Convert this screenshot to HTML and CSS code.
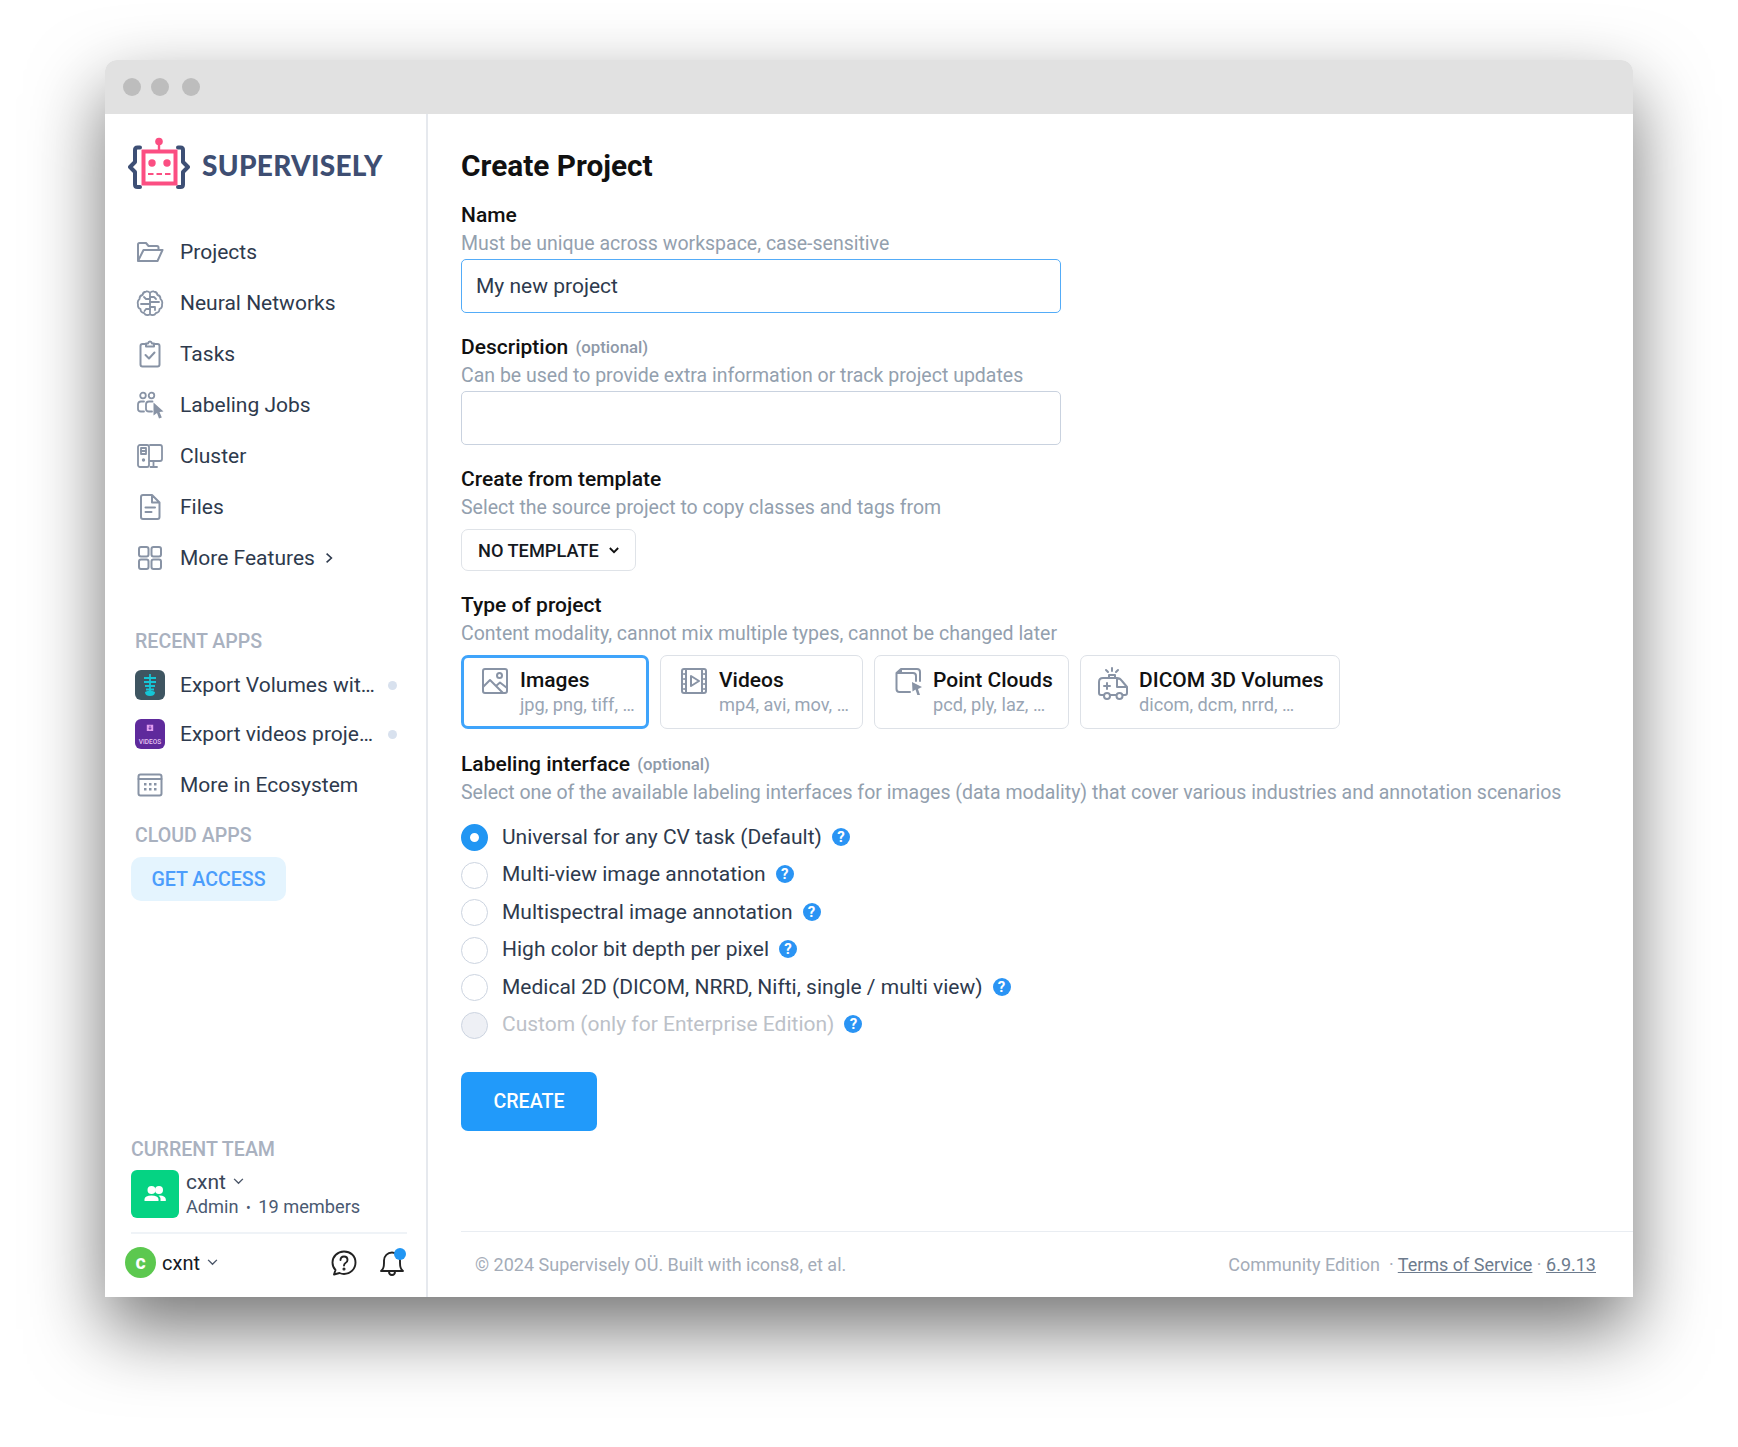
FILE: index.html
```html
<!DOCTYPE html>
<html lang="en">
<head>
<meta charset="utf-8">
<title>Create Project - Supervisely</title>
<link rel="stylesheet" href="styles.css">
</head>
<body>
<div class="window">
  <div class="titlebar"><span class="dot"></span><span class="dot"></span><span class="dot dot-last"></span></div>
  <div class="app">
    <aside class="sidebar">
      <div class="logo">
        <svg class="logo-mark" viewBox="0 0 62 52" width="62" height="52">
          <g fill="none" stroke="#3d4f75" stroke-width="4" stroke-linecap="round" stroke-linejoin="round">
            <path d="M12 10.5H9.5Q7 10.5 7 13V25L2 30L7 35V47.5Q7 50 9.5 50H12"/>
            <path d="M50 10.5H52.5Q55 10.5 55 13V25L60 30L55 35V47.5Q55 50 52.5 50H50"/>
          </g>
          <rect x="15.5" y="14.5" width="32" height="32" fill="#fff" stroke="#fb4e82" stroke-width="4"/>
          <path d="M31 5V14" stroke="#fb4e82" stroke-width="2.4"/>
          <circle cx="31" cy="4.5" r="3.8" fill="#fb4e82"/>
          <circle cx="24" cy="26" r="3.7" fill="#fb4e82"/>
          <circle cx="39" cy="26" r="3.7" fill="#fb4e82"/>
          <path d="M20 37H43" stroke="#fb4e82" stroke-width="2.2" stroke-dasharray="5.5 3"/>
        </svg>
        <span class="logo-text">SUPERVISELY</span>
      </div>
      <nav class="nav">
        <a class="nav-row"><span class="nav-icon"><svg viewBox="0 0 28 24" width="28" height="24" class="ico"><path d="M2 21V4.5Q2 3 3.5 3H10L12.5 6H21Q22.5 6 22.5 7.5V10M2 21H21.5L26.5 10H7.5L2 21Z"/></svg></span>Projects</a>
        <a class="nav-row"><span class="nav-icon"><svg viewBox="0 0 28 28" width="28" height="28" class="ico ico-thin"><path d="M14 4Q12.500 2 10 2.500Q7 3 6.500 6Q3.500 6.500 3.500 10Q1 12 2 15.500Q1.500 19 4.500 20Q4.500 23.500 8 24Q9.500 26.500 12 26Q13.500 26 14 25Q14.500 26 16 26Q18.500 26.500 20 24Q23.500 23.500 23.500 20Q26.500 19 26 15.500Q27 12 24.500 10Q24.500 6.500 21.500 6Q21 3 18 2.500Q15.500 2 14 4V25"/><path d="M14 10H10L8 8M14 15H5M14 20H10L8.500 22M14 8H18L20 10M14 13H23M14 18H19V21"/></svg></span>Neural Networks</a>
        <a class="nav-row"><span class="nav-icon"><svg viewBox="0 0 28 28" width="28" height="28" class="ico"><path d="M10 4H6.500Q4.500 4 4.500 6V24.500Q4.500 26.500 6.500 26.500H21.500Q23.500 26.500 23.500 24.500V6Q23.500 4 21.500 4H18M10 6.500V3.500H12Q12.500 1.500 14 1.500T16 3.500H18V6.500ZM9.500 15L13 18.500L18.500 12.500"/></svg></span>Tasks</a>
        <a class="nav-row"><span class="nav-icon"><svg viewBox="0 0 28 28" width="28" height="28" class="ico ico-thin"><circle cx="7" cy="4.500" r="2.800"/><circle cx="15.500" cy="4.500" r="2.800"/><path d="M8 10.500H5Q2 10.500 2 13.500V18Q2 20.500 5 20.500H8M16.500 10.500H13Q10 10.500 10 13.500V18Q10 20.500 13 20.500H16"/><path class="ico-fill" d="M17.500 11.500L27.500 20.500L23.500 21L25.800 26.500L23 27.500L21 22L17.500 24.500Z"/></svg></span>Labeling Jobs</a>
        <a class="nav-row"><span class="nav-icon"><svg viewBox="0 0 28 28" width="28" height="28" class="ico ico-thin"><rect x="2" y="3" width="11" height="22" rx="2"/><rect x="5" y="6" width="5" height="6"/><path d="M5 9H10"/><circle cx="7.500" cy="18" r=".8"/><path d="M14 3H24Q26 3 26 5V17Q26 19 24 19H14M17.500 19V25M14.500 25H21"/></svg></span>Cluster</a>
        <a class="nav-row"><span class="nav-icon"><svg viewBox="0 0 28 28" width="28" height="28" class="ico"><path d="M16 2H7Q5 2 5 4V24Q5 26 7 26H21.500Q23.500 26 23.500 24V9.500ZM16 2V9.500H23.500M9.500 14.500H19M9.500 19H15.500"/></svg></span>Files</a>
        <a class="nav-row"><span class="nav-icon"><svg viewBox="0 0 28 28" width="28" height="28" class="ico"><rect x="3" y="3" width="9.500" height="9.500" rx="2"/><rect x="15.500" y="3" width="9.500" height="9.500" rx="2"/><rect x="3" y="15.500" width="9.500" height="9.500" rx="2"/><rect x="15.500" y="15.500" width="9.500" height="9.500" rx="2"/></svg></span>More Features<svg class="chev-right" viewBox="0 0 10 14" width="8" height="12"><path d="M2 1.500L8 7L2 12.500"/></svg></a>
      </nav>
      <h3 class="side-title side-title-recent">RECENT APPS</h3>
      <div class="app-row">
        <span class="app-icon app-icon-teal"><svg viewBox="0 0 30 30" width="30" height="30"><path d="M15 4V22M9 8H21M9 12H21M10 16H20M11 19.500H19" stroke="#15c6d6" stroke-width="1.800" fill="none"/><path d="M10 22Q15 19 20 22Q20 26 15 26Q10 26 10 22Z" fill="#15c6d6"/></svg></span>
        <span class="app-name">Export Volumes wit…</span><span class="status-dot"></span>
      </div>
      <div class="app-row app-row-next">
        <span class="app-icon app-icon-purple"><svg viewBox="0 0 30 30" width="30" height="16"><path d="M9 3H21V15H9Z" fill="#e29df0" transform="translate(0 2)"/><path d="M15 7V13M12.500 11L15 14L17.500 11" stroke="#5f2a9c" stroke-width="1.800" fill="none"/></svg><span class="app-icon-label">VIDEOS</span></span>
        <span class="app-name">Export videos proje…</span><span class="status-dot"></span>
      </div>
      <a class="nav-row nav-row-eco"><span class="nav-icon nav-icon-eco"><svg viewBox="0 0 28 28" width="28" height="28" class="ico"><rect x="2.500" y="3.500" width="23" height="21" rx="2"/><path d="M2.500 8H25.500"/><g class="ico-fill"><rect x="8" y="12" width="2.500" height="2.500"/><rect x="13" y="12" width="2.500" height="2.500"/><rect x="18" y="12" width="2.500" height="2.500"/><rect x="8" y="17" width="2.500" height="2.500"/><rect x="13" y="17" width="2.500" height="2.500"/><rect x="18" y="17" width="2.500" height="2.500"/></g></svg></span>More in Ecosystem</a>
      <h3 class="side-title side-title-cloud">CLOUD APPS</h3>
      <button class="get-access">GET ACCESS</button>

      <div class="team-block">
        <h3 class="team-title">CURRENT TEAM</h3>
        <div class="team">
          <span class="team-icon"><svg viewBox="0 0 24 24" width="24" height="24" fill="#fff"><circle cx="8.500" cy="8" r="4"/><circle cx="16" cy="8" r="4"/><path d="M1.500 19V17Q2 13.500 8.500 13.500T15.500 17V19ZM17 13.500Q22 13.800 22.800 17V19H17.500V16.500Q17.500 15 15.500 13.800Z"/></svg></span>
          <div class="team-info">
            <div class="team-name">cxnt<svg class="chev-down" viewBox="0 0 12 8" width="11" height="7"><path d="M1 1L6 6L11 1"/></svg></div>
            <div class="team-meta">Admin<span class="team-sep">•</span>19 members</div>
          </div>
        </div>
        <div class="user-row">
          <span class="avatar">c</span>
          <span class="user-name">cxnt</span>
          <svg class="chev-down" viewBox="0 0 12 8" width="11" height="7"><path d="M1 1L6 6L11 1"/></svg>
          <span class="user-actions">
            <svg viewBox="0 0 28 28" width="28" height="28" class="ico-dark"><path d="M14 2.500C7.500 2.500 2.500 7.500 2.500 13.500C2.500 16.500 3.500 19 5.500 21L4 25.500L9.500 24C11 24.700 12.500 25 14 25C20.500 25 25.500 20 25.500 13.500S20.500 2.500 14 2.500Z"/><path d="M10.500 11Q10.500 7.500 14 7.500T17.500 11Q17.500 13 15.500 14Q14 15 14 16.500"/><circle cx="14" cy="20" r=".6"/></svg>
            <span class="bell"><svg viewBox="0 0 26 28" width="26" height="28" class="ico-dark"><path d="M2 22Q5 20 5 14V11.500C5 7 8.500 3.500 13 3.500S21 7 21 11.500V14Q21 20 24 22ZM10 22.500Q10 26 13 26T16 22.500"/></svg><span class="bell-dot"></span></span>
          </span>
        </div>
      </div>
    </aside>
    <main class="main">
      <div class="content">
        <h1 class="page-title">Create Project</h1>
        <section class="field">
          <div class="label">Name</div>
          <div class="hint">Must be unique across workspace, case-sensitive</div>
          <div class="input input-focus">My new project</div>
        </section>
        <section class="field">
          <div class="label">Description <span class="optional">(optional)</span></div>
          <div class="hint">Can be used to provide extra information or track project updates</div>
          <div class="input"></div>
        </section>
        <section class="field field-template">
          <div class="label">Create from template</div>
          <div class="hint">Select the source project to copy classes and tags from</div>
          <button class="template-btn">NO TEMPLATE<svg class="chev-down chev-bold" viewBox="0 0 12 8" width="10" height="7"><path d="M1 1L6 6L11 1"/></svg></button>
        </section>
        <section class="field">
          <div class="label">Type of project</div>
          <div class="hint">Content modality, cannot mix multiple types, cannot be changed later</div>
          <div class="cards">
            <div class="card card-active card-images">
              <svg viewBox="0 0 28 28" width="28" height="28" class="card-ico"><rect x="2" y="2" width="24" height="24" rx="2"/><circle cx="18.500" cy="8.500" r="2.500"/><path d="M2 20L9 13L22 26M15 19L19 15.500L26 21"/></svg>
              <div><div class="card-title">Images</div><div class="card-sub">jpg, png, tiff, …</div></div>
            </div>
            <div class="card card-videos">
              <svg viewBox="0 0 28 28" width="28" height="28" class="card-ico"><rect x="2" y="2" width="24" height="24" rx="2"/><path d="M6 2V26M22 2V26"/><path d="M4 7H4.100M4 12H4.100M4 17H4.100M4 22H4.100M24 7H24.100M24 12H24.100M24 17H24.100M24 22H24.100"/><path d="M11 9L19 14L11 19Z"/></svg>
              <div><div class="card-title">Videos</div><div class="card-sub">mp4, avi, mov, …</div></div>
            </div>
            <div class="card card-clouds">
              <svg viewBox="0 0 28 28" width="28" height="28" class="card-ico"><path d="M7 2H23Q26 2 26 5V14M7 2L2.500 6V22Q2.500 25 5.500 25H16M2.500 6H19Q22 6 22 9V14M7 2V6"/><path class="ico-fill" d="M18 15L28 20L24 22L26 28L23.500 28.500L21.500 22.500L18.500 24.500Z"/></svg>
              <div><div class="card-title">Point Clouds</div><div class="card-sub">pcd, ply, laz, …</div></div>
            </div>
            <div class="card card-dicom">
              <svg viewBox="0 0 32 34" width="32" height="34" class="card-ico"><path d="M7 28H4Q2 28 2 26V15Q2 11 6 11H20Q23 11 25 14L30 20V26Q30 28 28 28H26M13 28H19M20 12V20H30M7 19H13M10 16V22"/><circle cx="10" cy="29" r="3"/><circle cx="22.500" cy="29" r="3"/><path d="M12 11V8H18V11M15 1V4M9 3L11 5M21 3L19 5"/></svg>
              <div><div class="card-title">DICOM 3D Volumes</div><div class="card-sub">dicom, dcm, nrrd, …</div></div>
            </div>
          </div>
        </section>
        <section class="field field-radio">
          <div class="label">Labeling interface <span class="optional">(optional)</span></div>
          <div class="hint">Select one of the available labeling interfaces for images (data modality) that cover various industries and annotation scenarios</div>
          <div class="radios">
            <div class="radio-row"><span class="radio radio-on"></span><span class="radio-text">Universal for any CV task (Default)</span><span class="help">?</span></div>
            <div class="radio-row"><span class="radio"></span><span class="radio-text">Multi-view image annotation</span><span class="help">?</span></div>
            <div class="radio-row"><span class="radio"></span><span class="radio-text">Multispectral image annotation</span><span class="help">?</span></div>
            <div class="radio-row"><span class="radio"></span><span class="radio-text">High color bit depth per pixel</span><span class="help">?</span></div>
            <div class="radio-row"><span class="radio"></span><span class="radio-text">Medical 2D (DICOM, NRRD, Nifti, single / multi view)</span><span class="help">?</span></div>
            <div class="radio-row radio-row-off"><span class="radio radio-off"></span><span class="radio-text">Custom (only for Enterprise Edition)</span><span class="help">?</span></div>
          </div>
        </section>
        <button class="create-btn">CREATE</button>
      </div>
      <footer class="footer">
        <span>© 2024 Supervisely OÜ. Built with icons8, et al.</span>
        <span class="footer-right">Community Edition &nbsp;· <a class="footer-link">Terms of Service</a> · <a class="footer-link">6.9.13</a></span>
      </footer>
    </main>
  </div>
</div>
</body>
</html>
```
FILE: styles.css
```css
* { box-sizing: border-box; }
html, body { margin: 0; padding: 0; background: #fff; }
body { height: 1447px; overflow: hidden; padding: 60px 105px 0; font-family: Roboto, "Liberation Sans", sans-serif; color: #2e3a4d; }

.window { width: 1528px; height: 1237px; background: #fff; border-radius: 12px 12px 0 0; box-shadow: 0 32px 75px rgba(0,0,0,.55); display: flex; flex-direction: column; }
.titlebar { height: 54px; flex: none; background: #e1e1e1; border-radius: 12px 12px 0 0; display: flex; align-items: center; padding: 0 0 0 18px; gap: 10px; }
.dot { width: 18px; height: 18px; border-radius: 50%; background: #bdbdbd; }
.dot-last { margin-left: 3px; }
.app { flex: 1; display: flex; min-height: 0; }

.sidebar { width: 323px; flex: none; border-right: 2px solid #e6e9ee; display: flex; flex-direction: column; padding-top: 23px; }
.logo { display: flex; align-items: flex-start; padding-left: 23px; height: 52px; gap: 12px; }
.logo-mark { flex: none; }
.logo-text { font-family: Lato, "Open Sans", sans-serif; font-weight: 900; font-size: 28px; line-height: 30px; color: #3e4e72; margin-top: 13px; letter-spacing: .3px; }
.nav { margin-top: 37px; display: flex; flex-direction: column; }
.nav-row { height: 51px; display: flex; align-items: center; padding-left: 31px; font-size: 21px; color: #2e3a4d; }
.nav-icon { width: 28px; height: 28px; margin-right: 16px; display: flex; align-items: center; justify-content: center; flex: none; }
.ico, .card-ico { fill: none; stroke: #8893a5; stroke-width: 2; stroke-linejoin: round; stroke-linecap: round; flex: none; }
.ico-thin { stroke-width: 1.800; }
.ico-fill { fill: #8893a5; stroke: none; }
.chev-right { margin-left: 10px; fill: none; stroke: #2e3a4d; stroke-width: 2; }
.chev-down { fill: none; stroke: #4a5568; stroke-width: 1.600; margin-left: 7px; }
.chev-bold { stroke: #111; stroke-width: 2.200; margin-left: 10px; }

.side-title { margin: 0; font-size: 19.600px; line-height: 26px; font-weight: 500; color: #a9b1bf; padding-left: 30px; }
.side-title-recent { margin-top: 46px; }
.side-title-cloud { margin-top: 13px; }
.app-row { display: flex; align-items: center; height: 30px; padding-left: 30px; margin-top: 15px; font-size: 21px; }
.app-row-next { margin-top: 19px; }
.app-icon { width: 30px; height: 30px; border-radius: 6px; flex: none; margin-right: 15px; display: flex; flex-direction: column; align-items: center; overflow: hidden; }
.app-icon-teal { background: #3e5561; }
.app-icon-purple { background: #5f2a9c; padding-top: 3px; }
.app-icon-label { font-size: 6.500px; line-height: 8px; color: #e6c3f2; font-weight: 500; }
.app-name { width: 208px; white-space: nowrap; color: #2e3a4d; }
.status-dot { width: 9px; height: 9px; border-radius: 50%; background: #d8e1ee; }
.nav-row-eco { margin-top: 11px; height: 50px; }
.get-access { align-self: flex-start; margin: 8px 0 0 26px; width: 155px; height: 44px; border: 0; border-radius: 10px; background: #e4f4fe; color: #4b9dfc; font: 500 19.600px Roboto, sans-serif; }

.team-block { margin-top: auto; padding: 0 19px 0 26px; }
.team-title { margin: 0; font-size: 19.600px; line-height: 26px; font-weight: 500; color: #a9b1bf; }
.team { display: flex; align-items: center; gap: 7px; margin-top: 7px; height: 48px; }
.team-icon { width: 48px; height: 48px; border-radius: 6px; background: #05d383; display: flex; align-items: center; justify-content: center; flex: none; }
.team-info { display: flex; flex-direction: column; }
.team-name { font-size: 21px; line-height: 26px; color: #3a4658; display: flex; align-items: center; }
.team-meta { font-size: 18.200px; line-height: 24px; color: #4a5a72; }
.team-sep { margin: 0 7.500px; font-size: 14px; }
.user-row { margin: 14px 0 0 -6px; height: 65px; padding-bottom: 4px; display: flex; align-items: center; position: relative; color: #111; font-size: 20px; }
.user-row::before { content: ""; position: absolute; left: 6px; right: 0; top: 0; height: 2px; background: #eff3f7; }
.avatar { width: 31px; height: 31px; border-radius: 50%; background: #5cc84f; color: #fff; font-weight: 700; font-size: 19.600px; display: flex; align-items: center; justify-content: center; margin-right: 6px; flex: none; }
.user-name { color: #15191f; }
.user-actions { margin-left: auto; padding-right: 2px; display: flex; align-items: center; gap: 21px; }
.ico-dark { fill: none; stroke: #222; stroke-width: 1.900; stroke-linejoin: round; stroke-linecap: round; display: block; }
.bell { position: relative; display: block; }
.bell-dot { position: absolute; right: -1px; top: -1px; width: 12px; height: 12px; background: #2196f3; border-radius: 50%; }

.main { flex: 1; min-width: 0; display: flex; flex-direction: column; }
.content { flex: 1; padding: 32px 0 0 33px; }
.page-title { margin: 0 0 15px; font-size: 29.800px; line-height: 40px; font-weight: 700; color: #111; }
.field { margin-bottom: 20.500px; }
.field-template { margin-bottom: 20px; }
.label { font-size: 21px; line-height: 28px; font-weight: 500; color: #111; margin-bottom: 1px; }
.optional { font-size: 16.800px; color: #8e99a8; margin-left: 2px; font-weight: 500; vertical-align: 1px; }
.hint { font-size: 19.500px; line-height: 28px; color: #93a0ae; white-space: nowrap; }
.input { width: 600px; height: 54px; margin-top: .5px; border: 1px solid #c9d2df; border-radius: 5px; padding: 0 14px; display: flex; align-items: center; font-size: 21px; color: #2e3a4d; }
.input-focus { border: 1px solid #53acf8; }
.template-btn { margin-top: 7px; width: 175px; height: 42px; background: #fff; border: 1px solid #dfe3e8; border-radius: 7px; font: 500 18.200px Roboto, sans-serif; color: #15191f; display: flex; align-items: center; padding: 0 0 0 16px; }

.cards { display: flex; margin-top: 7px; gap: 11px; }
.card { height: 74px; border: 1px solid #dde1e7; border-radius: 7px; display: flex; align-items: flex-start; padding-top: 11px; gap: 11px; }
.card-active { border: 3px solid #3fa4fb; padding-top: 9px; }
.card-images { width: 188px; padding-left: 17px; gap: 11px; }
.card-videos { width: 203px; padding-left: 19px; gap: 11px; }
.card-clouds { width: 195px; padding-left: 19px; gap: 11px; }
.card-dicom { width: 260px; padding-left: 16px; gap: 10px; }
.card-title { font-size: 21px; line-height: 26px; font-weight: 500; color: #111; white-space: nowrap; }
.card-sub { font-size: 18.200px; line-height: 24px; color: #99a5b4; white-space: nowrap; }

.radios { margin-top: 11.500px; display: flex; flex-direction: column; }
.radio-row { height: 37.500px; display: flex; align-items: center; font-size: 21px; color: #2e3a4d; }
.radio { width: 27px; height: 27px; border-radius: 50%; border: 1px solid #ccd4e0; background: #fff; margin: 2px 14px 0 0; flex: none; }
.radio-on { border: 9px solid #2196f3; }
.radio-off { background: #eef0f5; }
.radio-row-off .radio-text { color: #bcc1c8; }
.help { width: 18px; height: 18px; border-radius: 50%; background: #2a94f4; color: #fff; font-size: 15px; font-weight: 700; display: flex; align-items: center; justify-content: center; margin-left: 10px; flex: none; }
.create-btn { display: block; margin-top: 28.500px; width: 136px; height: 59px; border: 0; border-radius: 7px; background: #219afa; color: #fff; font: 500 19.600px Roboto, sans-serif; }

.footer { margin-left: 33px; height: 66px; flex: none; border-top: 1px solid #e9edf2; display: flex; align-items: center; justify-content: space-between; padding: 0 37px 0 14px; font-size: 18px; color: #a4acb8; }
.footer-link { text-decoration: underline; color: #6d7b8d; }
```
